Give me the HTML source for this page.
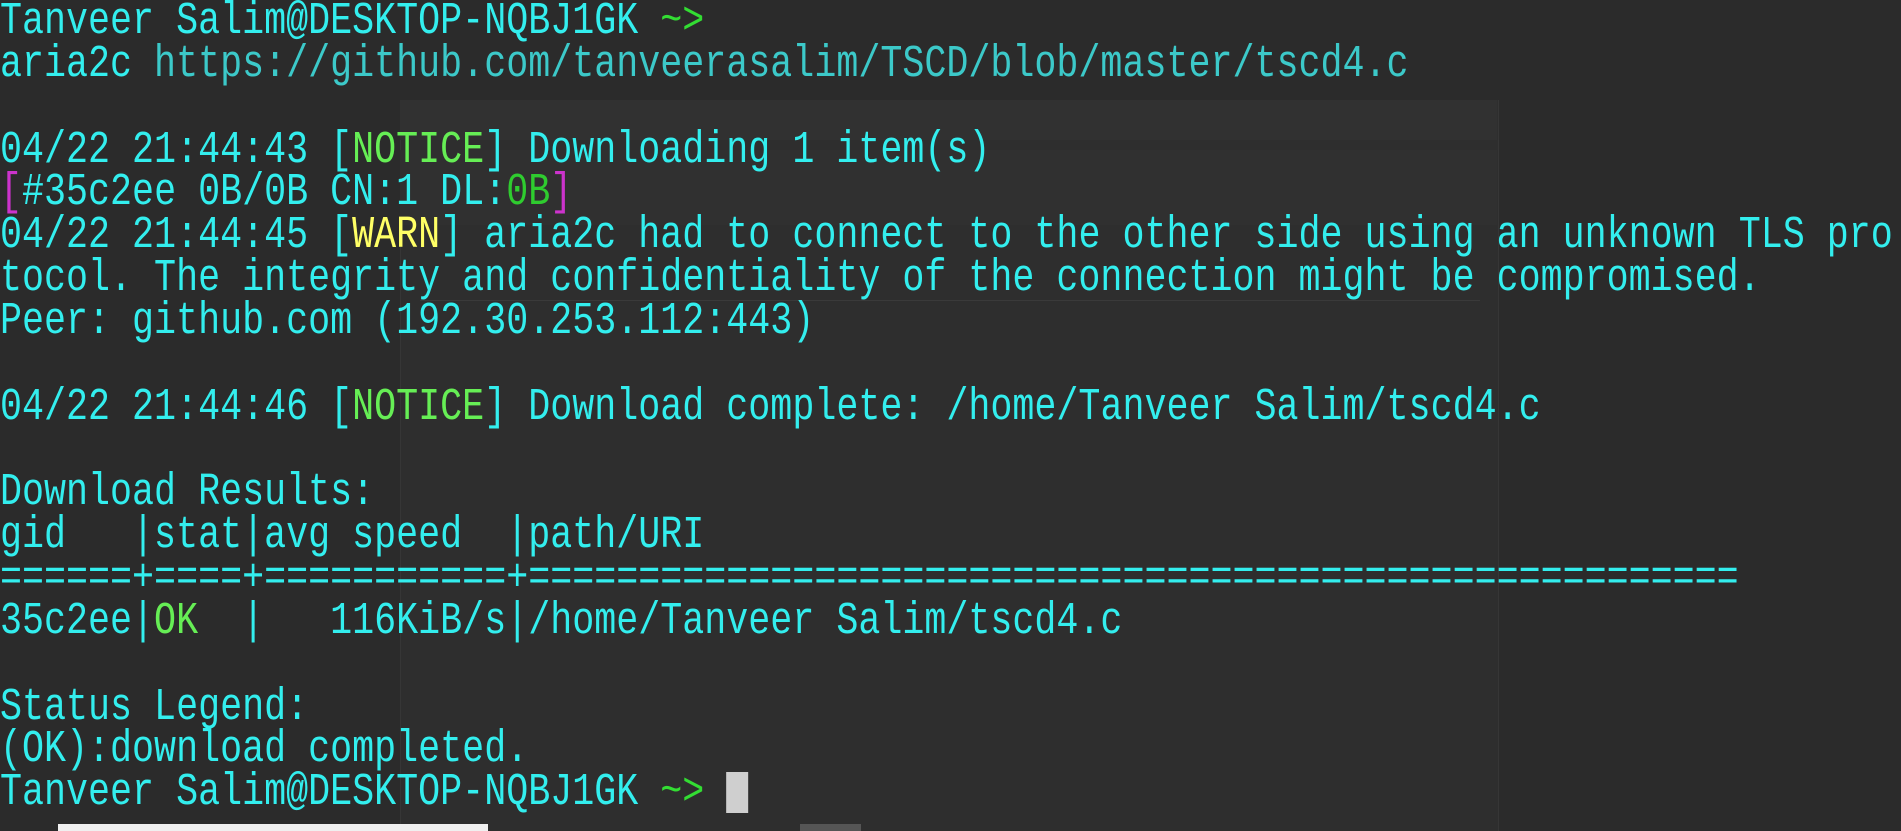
<!DOCTYPE html>
<html><head><meta charset="utf-8"><style>
html,body{margin:0;padding:0;width:1901px;height:831px;overflow:hidden;background:#2b2b2b;}
.bgpanel{position:absolute;left:400px;top:100px;width:1097px;height:731px;background:#2e2e2e;border-left:1px solid #363636;border-right:1px solid #363636;}
.bgbar{position:absolute;background:#333;}
pre{position:absolute;left:0;top:1px;margin:0;font-family:"Liberation Mono","DejaVu Sans Mono",monospace;font-size:45px;letter-spacing:0;line-height:42.85px;color:#33eeee;white-space:pre;transform:scaleX(0.815);transform-origin:0 0;}
.u{color:#3cc9c9}.g{color:#66ee55}.dg{color:#2fcc2f}.m{color:#cc33cc}.y{color:#ffff66}.t{color:#33dd33}
.cur{display:inline-block;width:27px;height:41px;background:#cfcfcf;vertical-align:-9px;}
.bot1{position:absolute;left:58px;top:824px;width:430px;height:7px;background:#f0f0f0;}
.bot2{position:absolute;left:800px;top:824px;width:61px;height:7px;background:#555;}
</style></head><body>
<div class="bgpanel"></div>
<div class="bgbar" style="left:400px;top:100px;width:1097px;height:40px;background:#313131"></div>
<div class="bgbar" style="left:400px;top:150px;width:1097px;height:75px;background:#303030"></div>
<div class="bgbar" style="left:420px;top:300px;width:1060px;height:1px;background:#3a3a3a"></div>
<pre>Tanveer Salim@DESKTOP-NQBJ1GK <span class="t">~&gt;</span>
aria2c <span class="u">https://github.com/tanveerasalim/TSCD/blob/master/tscd4.c</span>

04/22 21:44:43 [<span class="g">NOTICE</span>] Downloading 1 item(s)
<span class="m">[</span>#35c2ee 0B/0B CN:1 DL:<span class="dg">0B</span><span class="m">]</span>
04/22 21:44:45 [<span class="y">WARN</span>] aria2c had to connect to the other side using an unknown TLS pro
tocol. The integrity and confidentiality of the connection might be compromised.
Peer: github.com (192.30.253.112:443)

04/22 21:44:46 [<span class="g">NOTICE</span>] Download complete: /home/Tanveer Salim/tscd4.c

Download Results:
gid   |stat|avg speed  |path/URI
======+====+===========+=======================================================
35c2ee|<span class="g">OK</span>  |   116KiB/s|/home/Tanveer Salim/tscd4.c

Status Legend:
(OK):download completed.
Tanveer Salim@DESKTOP-NQBJ1GK <span class="t">~&gt;</span> <span class="cur"></span></pre>
<div class="bot1"></div><div class="bot2"></div>
</body></html>
